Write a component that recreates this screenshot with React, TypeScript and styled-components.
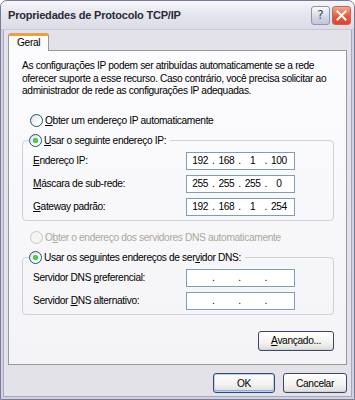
import styled, { createGlobalStyle } from 'styled-components';

const GlobalStyle = createGlobalStyle`
  html, body {
    margin: 0;
    padding: 0;
    background: #ffffff;
  }
  body {
    font-family: 'Liberation Sans', Arial, sans-serif;
    font-size: 10.2px;
    letter-spacing: -0.35px;
    color: #000000;
  }
`;

// Window chrome (XP silver, inactive caption)
const Window = styled.div`
  box-sizing: border-box;
  width: 355px;
  height: 400px;
  display: flex;
  flex-direction: column;
  border: 1px solid #7a7a98;
  border-radius: 7px 7px 0 0;
  background: #e2e2e8;
  box-shadow: inset 0 0 0 2px #d2d2de, inset 0 0 0 3px #a6a6bc;
  overflow: hidden;
`;

const TitleBar = styled.div`
  height: 28px;
  flex-shrink: 0;
  display: flex;
  align-items: center;
  padding: 0 3px 0 7px;
  background: linear-gradient(#f6f6fa, #e6e6ee 45%, #dcdce6);
  border-bottom: 1px solid #c8c8d6;
`;

const Caption = styled.span`
  flex: 1;
  font-family: 'Liberation Sans', Arial, sans-serif;
  font-weight: 700;
  font-size: 11px;
  letter-spacing: -0.2px;
  color: #2a2a3a;
`;

const CaptionButton = styled.div<{ $close?: boolean }>`
  box-sizing: border-box;
  width: 19px;
  height: 19px;
  margin-left: 2px;
  border-radius: 3px;
  border: 1px solid ${p => (p.$close ? '#c06858' : '#8e94ac')};
  background: ${p =>
    p.$close
      ? 'linear-gradient(#f6a88e, #e65a3c 55%, #d8472c)'
      : 'linear-gradient(#fbfbfd, #d4d6e4 60%, #c4c6d8)'};
  display: flex;
  align-items: center;
  justify-content: center;
  font-family: 'DejaVu Sans', sans-serif;
  font-size: 12px;
  letter-spacing: 0;
  color: #404660;
`;

const Body = styled.div`
  flex: 1;
  display: flex;
  flex-direction: column;
  padding: 3px 8px 8px 7px;
`;

const TabStrip = styled.div`
  display: flex;
  height: 17px;
  position: relative;
  z-index: 1;
`;

const Tab = styled.div`
  box-sizing: border-box;
  width: 41px;
  height: 18px;
  border: 1px solid #919b9c;
  border-bottom: none;
  border-top: 3px solid #f0a038;
  border-radius: 3px 3px 0 0;
  background: #fcfcfe;
  padding: 1px 0 0 8px;
`;

const TabPanel = styled.div`
  box-sizing: border-box;
  width: 339px;
  height: 315px;
  border: 1px solid #919b9c;
  background: linear-gradient(#fcfcfe, #f4f4f6);
  padding: 9px 12px 0 13px;
  display: flex;
  flex-direction: column;
`;

const Intro = styled.p`
  margin: 0;
  line-height: 12.5px;
`;

const Key = styled.span`
  text-decoration: underline;
  text-underline-offset: 1px;
`;

const RadioRow = styled.div<{ $disabled?: boolean; $top: number }>`
  display: flex;
  align-items: center;
  height: 13px;
  margin-top: ${p => p.$top}px;
  padding-left: 8px;
  color: ${p => (p.$disabled ? '#aca899' : '#000000')};
`;

const RadioCircle = styled.span<{ $checked?: boolean; $disabled?: boolean }>`
  box-sizing: border-box;
  width: 13px;
  height: 13px;
  margin-right: 2px;
  border-radius: 50%;
  border: 1px solid ${p => (p.$disabled ? '#cac8bb' : '#1c5180')};
  background: ${p => (p.$disabled ? '#f4f4f0' : 'linear-gradient(135deg, #dcdcd6, #ffffff 70%)')};
  display: flex;
  align-items: center;
  justify-content: center;

  &::after {
    content: '';
    width: 5px;
    height: 5px;
    border-radius: 50%;
    background: ${p => (p.$checked ? 'radial-gradient(#5ee05e, #21a121)' : 'transparent')};
  }
`;

const Group = styled.fieldset<{ $top: number }>`
  margin: ${p => p.$top}px 0 0 0;
  width: 312px;
  box-sizing: border-box;
  border: 1px solid #d0d0d8;
  border-radius: 4px;
  padding: 0 0 4px 6px;
`;

const Legend = styled.legend`
  padding: 0 4px 0 0;
  height: 13px;
  display: flex;
  align-items: center;
`;

const Fields = styled.div`
  display: flex;
  flex-direction: column;
  gap: 5px;
  padding: 5px 0 0 4px;
`;

const FieldRow = styled.div`
  display: grid;
  grid-template-columns: 153px 109px;
  align-items: center;
  height: 18px;
`;

const IpBox = styled.div`
  box-sizing: border-box;
  height: 18px;
  border: 1px solid #7f9db9;
  background: #ffffff;
  display: flex;
  align-items: center;
  padding: 0 4px 0 2px;
`;

const Octet = styled.span`
  flex: 1;
  text-align: center;
`;

const Dot = styled.span`
  width: 4px;
  text-align: center;
`;

const PanelFooter = styled.div`
  display: flex;
  justify-content: flex-end;
  margin-top: 16px;
  width: 312px;
`;

const Button = styled.button<{ $w: number; $default?: boolean }>`
  box-sizing: border-box;
  width: ${p => p.$w}px;
  height: 20px;
  padding: 0;
  font-family: 'Liberation Sans', Arial, sans-serif;
  font-size: 10.2px;
  letter-spacing: -0.35px;
  color: #000000;
  border: 1px solid #3c4868;
  border-radius: 3px;
  background: linear-gradient(#ffffff, #f2f2f0 60%, #dcdcd8);
  box-shadow: ${p =>
    p.$default
      ? 'inset 0 0 0 1px #b8d0f4, inset 0 -1px 0 1px #8aaee8'
      : 'inset 0 -1px 0 0 #d0d0d8'};
`;

const DialogFooter = styled.div`
  display: flex;
  justify-content: flex-end;
  gap: 8px;
  margin-top: 8px;
  width: 339px;
`;

function IpField({ parts }: { parts: string[] }) {
  return (
    <IpBox>
      {parts.map((p, i) => (
        <>
          {i > 0 && <Dot key={`d${i}`}>.</Dot>}
          <Octet key={`o${i}`}>{p}</Octet>
        </>
      ))}
    </IpBox>
  );
}

const empty = ['', '', '', ''];

export default function App() {
  return (
    <>
      <GlobalStyle />
      <Window>
        <TitleBar>
          <Caption>Propriedades de Protocolo TCP/IP</Caption>
          <CaptionButton>?</CaptionButton>
          <CaptionButton $close>
            <svg width="11" height="11" viewBox="0 0 11 11">
              <path d="M1.5 1.5 L9.5 9.5 M9.5 1.5 L1.5 9.5" stroke="#ffffff" strokeWidth="2" strokeLinecap="square" />
            </svg>
          </CaptionButton>
        </TitleBar>
        <Body>
          <TabStrip>
            <Tab>Geral</Tab>
          </TabStrip>
          <TabPanel>
            <Intro>
              As configurações IP podem ser atribuídas automaticamente se a rede oferecer suporte a esse recurso. Caso contrário, você precisa solicitar ao administrador de rede as configurações IP adequadas.
            </Intro>
            <RadioRow $top={16}>
              <RadioCircle />
              <span><Key>O</Key>bter um endereço IP automaticamente</span>
            </RadioRow>
            <Group $top={7}>
              <Legend>
                <RadioCircle $checked />
                <span><Key>U</Key>sar o seguinte endereço IP:</span>
              </Legend>
              <Fields>
                <FieldRow>
                  <span><Key>E</Key>ndereço IP:</span>
                  <IpField parts={['192', '168', '1', '100']} />
                </FieldRow>
                <FieldRow>
                  <span><Key>M</Key>áscara de sub-rede:</span>
                  <IpField parts={['255', '255', '255', '0']} />
                </FieldRow>
                <FieldRow>
                  <span><Key>G</Key>ateway padrão:</span>
                  <IpField parts={['192', '168', '1', '254']} />
                </FieldRow>
              </Fields>
            </Group>
            <RadioRow $top={10} $disabled>
              <RadioCircle $disabled />
              <span>O<Key>b</Key>ter o endereço dos servidores DNS automaticamente</span>
            </RadioRow>
            <Group $top={7}>
              <Legend>
                <RadioCircle $checked />
                <span>Usar os seguintes endereços de ser<Key>v</Key>idor DNS:</span>
              </Legend>
              <Fields>
                <FieldRow>
                  <span>Servidor DNS <Key>p</Key>referencial:</span>
                  <IpField parts={empty} />
                </FieldRow>
                <FieldRow>
                  <span>Servidor <Key>D</Key>NS alternativo:</span>
                  <IpField parts={empty} />
                </FieldRow>
              </Fields>
            </Group>
            <PanelFooter>
              <Button $w={76}><Key>A</Key>vançado...</Button>
            </PanelFooter>
          </TabPanel>
          <DialogFooter>
            <Button $w={62} $default>OK</Button>
            <Button $w={64}>Cancelar</Button>
          </DialogFooter>
        </Body>
      </Window>
    </>
  );
}
